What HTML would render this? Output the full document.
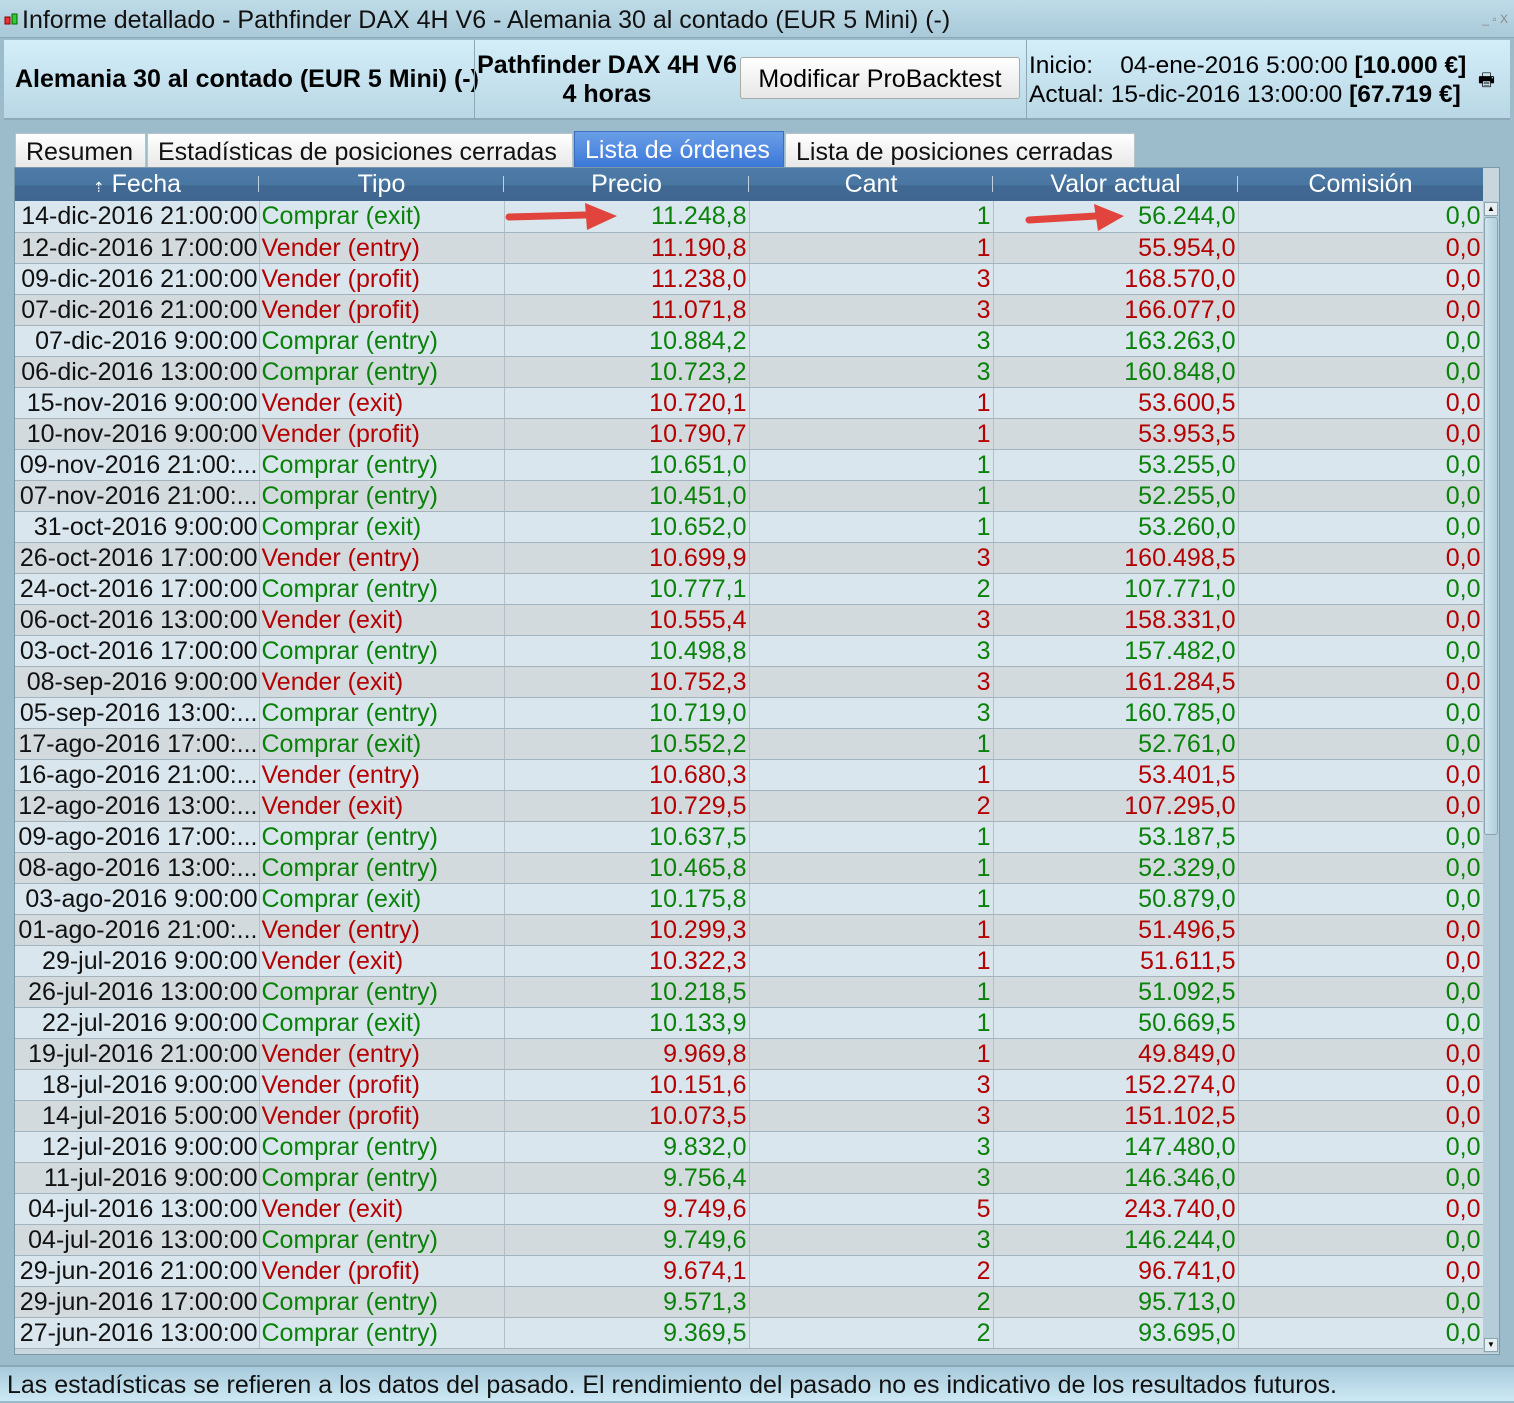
<!DOCTYPE html>
<html><head><meta charset="utf-8"><style>
*{margin:0;padding:0;box-sizing:border-box}
body{width:1514px;height:1401px;background:#9dbccb;font-family:"Liberation Sans",Arial,sans-serif;position:relative;overflow:hidden}
.title{position:absolute;left:0;top:0;width:1514px;height:38px;background:linear-gradient(#bfdbe8,#a9c9d8);border-bottom:1px solid #8aa7b5;font-size:25px;line-height:40px;padding-left:22px;color:#111;white-space:nowrap}
.wc{position:absolute;right:6px;top:4px;font-size:12px;color:#888;line-height:30px}
.hdr{position:absolute;left:4px;top:40px;width:1506px;height:80px;background:linear-gradient(#d3eef9,#b9d7e4);border-bottom:2px solid #8ea9b6}
.sep{position:absolute;top:0;width:1px;height:78px;background:#8ea9b6}
.b{font-weight:bold}
.btn{position:absolute;left:740px;top:57px;width:280px;height:42px;background:linear-gradient(#fff,#e6e6e6);border:1px solid #aaa;border-radius:3px;font-size:25px;text-align:center;line-height:42px;white-space:nowrap}
.tab{position:absolute;top:133px;height:34px;background:linear-gradient(#fff,#e8e8e8);border:1px solid #b8c4ca;border-bottom:none;font-size:25px;line-height:36px;padding:0 10px;color:#111;white-space:nowrap}
.tab.on{background:linear-gradient(#6a9ee6,#3c78d8);color:#fff;border-color:#3a6fc0}
.panel{position:absolute;left:14px;top:167px;width:1486px;height:1188px;border:1px solid #7b98a8;background:#c9d6de}
table{position:absolute;left:15px;top:168px;width:1468px;border-collapse:collapse;table-layout:fixed;font-size:25px}
th{height:33px;background:linear-gradient(#4d7aa6 0%,#4a76a2 50%,#406892 55%,#3f6791);color:#fff;font-weight:normal;font-size:25px;position:relative}
th:after{content:"";position:absolute;right:0;top:8px;height:16px;width:1px;background:#c0d0e0}
th:last-child:after{display:none}
td{height:31px;border-bottom:1px solid #a5b3bc;border-right:1px solid #b4c0c8;white-space:nowrap;overflow:hidden;padding:0 2px;line-height:30px}
tr:nth-child(even) td{background:#d9e6ee}
tr:nth-child(odd) td{background:#d3dade}
td:first-child{text-align:right;color:#111;padding:0 1px}
td:nth-child(2){text-align:left}
td:nth-child(n+3){text-align:right}
.g td:nth-child(n+2){color:#0a820a}
.r td:nth-child(n+2){color:#b40000}
.sb{position:absolute;left:1483px;top:201px;width:16px;height:1152px;background:#b5cdd9}
.thumb{position:absolute;left:1484px;top:217px;width:14px;height:618px;background:linear-gradient(90deg,#cfe3ec,#b2cfdc);border:1px solid #8aa4b2;border-radius:3px}
.ar{position:absolute;left:1484px;width:14px;height:14px;background:#e6eef2;border:1px solid #8aa4b2;font-size:8px;text-align:center;line-height:12px}
.foot{position:absolute;left:0;top:1365px;width:1514px;height:36px;background:linear-gradient(#a8cadb,#cde8f4);border-top:2px solid #8aa7b5;font-size:25px;line-height:36px;padding-left:7px;color:#111;white-space:nowrap}
</style></head><body>
<div class="title"><svg style="position:absolute;left:3px;top:12px" width="16" height="16"><rect x="2" y="5" width="5" height="7" fill="#e33" stroke="#800"/><rect x="9" y="2" width="5" height="10" fill="#3c3" stroke="#060"/></svg>Informe detallado - Pathfinder DAX 4H V6 - Alemania 30 al contado (EUR 5 Mini) (-)<span class="wc">_ ▫ X</span></div>
<div class="hdr">
<div class="b" style="position:absolute;left:11px;top:25px;font-size:25px;white-space:nowrap">Alemania 30 al contado (EUR 5 Mini) (-)</div>
<div class="sep" style="left:470px"></div>
<div class="b" style="position:absolute;left:472px;top:11px;width:262px;text-align:center;font-size:25px;line-height:29px;white-space:nowrap">Pathfinder DAX 4H V6<br>4 horas</div>
<div class="sep" style="left:1022px"></div>
<div style="position:absolute;left:1025px;top:11px;font-size:24.5px;line-height:29px;white-space:nowrap">Inicio:&nbsp;&nbsp;&nbsp; 04-ene-2016 5:00:00 <b>[10.000 €]</b><br>Actual: 15-dic-2016 13:00:00 <b>[67.719 €]</b></div>
<div style="position:absolute;left:1474px;top:28px;font-size:18px">🖶</div>
</div>
<div class="btn">Modificar ProBacktest</div>
<div class="tab" style="left:15px;width:131px">Resumen</div>
<div class="tab" style="left:147px;width:426px">Estadísticas de posiciones cerradas</div>
<div class="tab on" style="left:574px;width:210px;top:131px;height:36px">Lista de órdenes</div>
<div class="tab" style="left:785px;width:350px">Lista de posiciones cerradas</div>
<div class="panel"></div>
<table>
<colgroup><col style="width:244px"><col style="width:245px"><col style="width:245px"><col style="width:244px"><col style="width:245px"><col style="width:245px"></colgroup>
<tr><th><span style="font-size:14px">⇡</span> Fecha</th><th>Tipo</th><th>Precio</th><th>Cant</th><th>Valor actual</th><th>Comisión</th></tr>
<tr class="g"><td>14-dic-2016 21:00:00</td><td>Comprar (exit)</td><td>11.248,8</td><td>1</td><td>56.244,0</td><td>0,0</td></tr>
<tr class="r"><td>12-dic-2016 17:00:00</td><td>Vender (entry)</td><td>11.190,8</td><td>1</td><td>55.954,0</td><td>0,0</td></tr>
<tr class="r"><td>09-dic-2016 21:00:00</td><td>Vender (profit)</td><td>11.238,0</td><td>3</td><td>168.570,0</td><td>0,0</td></tr>
<tr class="r"><td>07-dic-2016 21:00:00</td><td>Vender (profit)</td><td>11.071,8</td><td>3</td><td>166.077,0</td><td>0,0</td></tr>
<tr class="g"><td>07-dic-2016 9:00:00</td><td>Comprar (entry)</td><td>10.884,2</td><td>3</td><td>163.263,0</td><td>0,0</td></tr>
<tr class="g"><td>06-dic-2016 13:00:00</td><td>Comprar (entry)</td><td>10.723,2</td><td>3</td><td>160.848,0</td><td>0,0</td></tr>
<tr class="r"><td>15-nov-2016 9:00:00</td><td>Vender (exit)</td><td>10.720,1</td><td>1</td><td>53.600,5</td><td>0,0</td></tr>
<tr class="r"><td>10-nov-2016 9:00:00</td><td>Vender (profit)</td><td>10.790,7</td><td>1</td><td>53.953,5</td><td>0,0</td></tr>
<tr class="g"><td>09-nov-2016 21:00:...</td><td>Comprar (entry)</td><td>10.651,0</td><td>1</td><td>53.255,0</td><td>0,0</td></tr>
<tr class="g"><td>07-nov-2016 21:00:...</td><td>Comprar (entry)</td><td>10.451,0</td><td>1</td><td>52.255,0</td><td>0,0</td></tr>
<tr class="g"><td>31-oct-2016 9:00:00</td><td>Comprar (exit)</td><td>10.652,0</td><td>1</td><td>53.260,0</td><td>0,0</td></tr>
<tr class="r"><td>26-oct-2016 17:00:00</td><td>Vender (entry)</td><td>10.699,9</td><td>3</td><td>160.498,5</td><td>0,0</td></tr>
<tr class="g"><td>24-oct-2016 17:00:00</td><td>Comprar (entry)</td><td>10.777,1</td><td>2</td><td>107.771,0</td><td>0,0</td></tr>
<tr class="r"><td>06-oct-2016 13:00:00</td><td>Vender (exit)</td><td>10.555,4</td><td>3</td><td>158.331,0</td><td>0,0</td></tr>
<tr class="g"><td>03-oct-2016 17:00:00</td><td>Comprar (entry)</td><td>10.498,8</td><td>3</td><td>157.482,0</td><td>0,0</td></tr>
<tr class="r"><td>08-sep-2016 9:00:00</td><td>Vender (exit)</td><td>10.752,3</td><td>3</td><td>161.284,5</td><td>0,0</td></tr>
<tr class="g"><td>05-sep-2016 13:00:...</td><td>Comprar (entry)</td><td>10.719,0</td><td>3</td><td>160.785,0</td><td>0,0</td></tr>
<tr class="g"><td>17-ago-2016 17:00:...</td><td>Comprar (exit)</td><td>10.552,2</td><td>1</td><td>52.761,0</td><td>0,0</td></tr>
<tr class="r"><td>16-ago-2016 21:00:...</td><td>Vender (entry)</td><td>10.680,3</td><td>1</td><td>53.401,5</td><td>0,0</td></tr>
<tr class="r"><td>12-ago-2016 13:00:...</td><td>Vender (exit)</td><td>10.729,5</td><td>2</td><td>107.295,0</td><td>0,0</td></tr>
<tr class="g"><td>09-ago-2016 17:00:...</td><td>Comprar (entry)</td><td>10.637,5</td><td>1</td><td>53.187,5</td><td>0,0</td></tr>
<tr class="g"><td>08-ago-2016 13:00:...</td><td>Comprar (entry)</td><td>10.465,8</td><td>1</td><td>52.329,0</td><td>0,0</td></tr>
<tr class="g"><td>03-ago-2016 9:00:00</td><td>Comprar (exit)</td><td>10.175,8</td><td>1</td><td>50.879,0</td><td>0,0</td></tr>
<tr class="r"><td>01-ago-2016 21:00:...</td><td>Vender (entry)</td><td>10.299,3</td><td>1</td><td>51.496,5</td><td>0,0</td></tr>
<tr class="r"><td>29-jul-2016 9:00:00</td><td>Vender (exit)</td><td>10.322,3</td><td>1</td><td>51.611,5</td><td>0,0</td></tr>
<tr class="g"><td>26-jul-2016 13:00:00</td><td>Comprar (entry)</td><td>10.218,5</td><td>1</td><td>51.092,5</td><td>0,0</td></tr>
<tr class="g"><td>22-jul-2016 9:00:00</td><td>Comprar (exit)</td><td>10.133,9</td><td>1</td><td>50.669,5</td><td>0,0</td></tr>
<tr class="r"><td>19-jul-2016 21:00:00</td><td>Vender (entry)</td><td>9.969,8</td><td>1</td><td>49.849,0</td><td>0,0</td></tr>
<tr class="r"><td>18-jul-2016 9:00:00</td><td>Vender (profit)</td><td>10.151,6</td><td>3</td><td>152.274,0</td><td>0,0</td></tr>
<tr class="r"><td>14-jul-2016 5:00:00</td><td>Vender (profit)</td><td>10.073,5</td><td>3</td><td>151.102,5</td><td>0,0</td></tr>
<tr class="g"><td>12-jul-2016 9:00:00</td><td>Comprar (entry)</td><td>9.832,0</td><td>3</td><td>147.480,0</td><td>0,0</td></tr>
<tr class="g"><td>11-jul-2016 9:00:00</td><td>Comprar (entry)</td><td>9.756,4</td><td>3</td><td>146.346,0</td><td>0,0</td></tr>
<tr class="r"><td>04-jul-2016 13:00:00</td><td>Vender (exit)</td><td>9.749,6</td><td>5</td><td>243.740,0</td><td>0,0</td></tr>
<tr class="g"><td>04-jul-2016 13:00:00</td><td>Comprar (entry)</td><td>9.749,6</td><td>3</td><td>146.244,0</td><td>0,0</td></tr>
<tr class="r"><td>29-jun-2016 21:00:00</td><td>Vender (profit)</td><td>9.674,1</td><td>2</td><td>96.741,0</td><td>0,0</td></tr>
<tr class="g"><td>29-jun-2016 17:00:00</td><td>Comprar (entry)</td><td>9.571,3</td><td>2</td><td>95.713,0</td><td>0,0</td></tr>
<tr class="g"><td>27-jun-2016 13:00:00</td><td>Comprar (entry)</td><td>9.369,5</td><td>2</td><td>93.695,0</td><td>0,0</td></tr>
</table>
<div class="sb"></div>
<div class="thumb"></div>
<div class="ar" style="top:202px">▲</div>
<div class="ar" style="top:1338px">▼</div>
<svg style="position:absolute;left:505px;top:200px" width="120" height="36"><path d="M4 17 L80 15" stroke="#e0443c" stroke-width="7" stroke-linecap="round"/><path d="M80 3 L112 16 L82 30 Z" fill="#e0443c"/></svg>
<svg style="position:absolute;left:1024px;top:200px" width="110" height="36"><path d="M5 20 L72 16" stroke="#e0443c" stroke-width="7" stroke-linecap="round"/><path d="M70 4 L100 16 L74 31 Z" fill="#e0443c"/></svg>
<div class="foot">Las estadísticas se refieren a los datos del pasado. El rendimiento del pasado no es indicativo de los resultados futuros.</div>
</body></html>
